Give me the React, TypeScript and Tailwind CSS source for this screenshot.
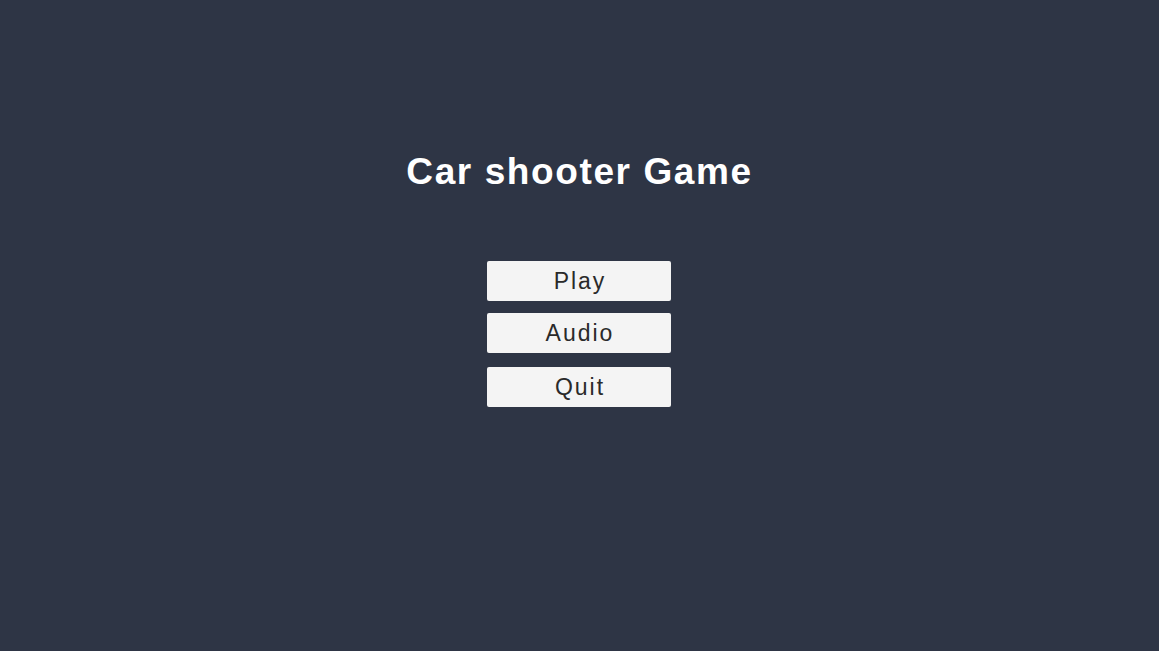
const buttons = ["Play", "Audio", "Quit"];

export default function App() {
  return (
    <div
      className="w-[1159px] h-[651px] bg-[#2e3545] flex flex-col items-center"
      style={{ fontFamily: '"Liberation Sans", Arial, sans-serif' }}
    >
      <h1 className="mt-[151px] text-[37px] leading-[42px] font-bold text-white tracking-[1.6px]">
        Car shooter Game
      </h1>
      <div className="mt-[68px] mr-[1px] flex flex-col gap-[12px]">
        {buttons.map((label, i) => (
          <button
            key={label}
            className={`w-[184px] h-[40px] rounded-[2px] bg-[#f4f4f4] text-[#2a2a2a] text-[23px] tracking-[2px] pl-[2px] flex items-center justify-center ${i === 2 ? "mt-[2px]" : ""}`}
          >
            {label}
          </button>
        ))}
      </div>
    </div>
  );
}
